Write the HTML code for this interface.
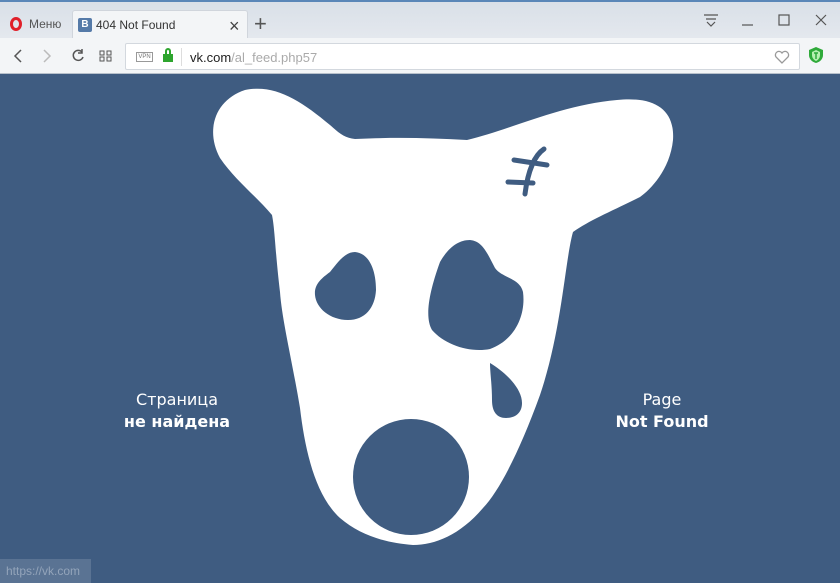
<!DOCTYPE html>
<html><head><meta charset="utf-8"><style>
*{margin:0;padding:0;box-sizing:border-box}
body{width:840px;height:583px;overflow:hidden;background:#3f5c81;font-family:"Liberation Sans",sans-serif;position:relative}
.tabbar{position:absolute;left:0;top:0;width:840px;height:38px;background:linear-gradient(#d9e0e8,#e4e8ee);border-top:2px solid #5a87b8}
.tab{position:absolute;left:72px;top:8px;width:176px;height:30px;background:#f3f5f7;border-radius:3px 3px 0 0;border:1px solid #d0d5dc;border-bottom:none}
.toolbar{position:absolute;left:0;top:38px;width:840px;height:36px;background:#f3f5f7;border-bottom:1px solid #b7c0cb}
.addr{position:absolute;left:125px;top:5px;width:675px;height:27px;background:#fff;border:1px solid #d3d8de;border-radius:2px}
.t{position:absolute;font-size:13px;color:#333}
.cap{position:absolute;color:#fff;font-family:"DejaVu Sans",sans-serif;text-align:center;font-size:16px;line-height:22px}
</style></head><body>
<div class="tabbar">
 <div style="position:absolute;left:10px;top:15px;width:12px;height:14px;border:3px solid #e0202a;border-radius:50%"></div>
 <div class="t" style="left:29px;top:15px;font-size:12px;color:#555">Меню</div>
 <div class="tab">
  <div style="position:absolute;left:5px;top:7px;width:14px;height:14px;background:#557aa8;border-radius:2px;color:#fff;font-size:10px;font-weight:bold;text-align:center;line-height:14px">B</div>
  <div class="t" style="left:23px;top:7px;font-size:12px">404 Not Found</div>
  <div class="t" style="left:156px;top:5px;font-size:18px;color:#444">×</div>
 </div>
 <div class="t" style="left:254px;top:9px;font-size:22px;color:#555;font-weight:300">+</div>
 <svg style="position:absolute;left:700px;top:10px" width="140" height="22" stroke="#555" fill="none" stroke-width="1.2">
  <path d="M4 3h14M6 7h10M7 10l4 4 4-4"/>
  <path d="M42 13h11"/>
  <rect x="79" y="3" width="10" height="10"/>
  <path d="M116 3l10 10M126 3l-10 10"/>
 </svg>
</div>
<div class="toolbar">
 <svg style="position:absolute;left:8px;top:9px" width="110" height="18" stroke="#555" fill="none" stroke-width="1.5">
  <path d="M13 3l-6 6 6 6"/>
  <path d="M36 3l6 6-6 6" stroke="#bbb"/>
  <path d="M74 5a5 5 0 1 0 1 5M74 2v4h-4"/>
  <rect x="92" y="4" width="4" height="4" stroke-width="1"/><rect x="99" y="4" width="4" height="4" stroke-width="1"/><rect x="92" y="10" width="4" height="4" stroke-width="1"/><rect x="99" y="10" width="4" height="4" stroke-width="1"/>
 </svg>
 <div class="addr">
  <div style="position:absolute;left:10px;top:8px;width:17px;height:10px;border:1px solid #999;font-size:6px;color:#777;text-align:center;line-height:8px">VPN</div>
  <div style="position:absolute;left:37px;top:10px;width:10px;height:8px;background:#2ea52e"></div>
  <div style="position:absolute;left:39px;top:4px;width:6px;height:8px;border:2px solid #2ea52e;border-bottom:none;border-radius:3px 3px 0 0"></div>
  <div style="position:absolute;left:55px;top:4px;width:1px;height:18px;background:#ddd"></div>
  <div class="t" style="left:64px;top:6px;color:#222">vk.com<span style="color:#aaa">/al_feed.php57</span></div>
  <svg style="position:absolute;left:648px;top:6px" width="16" height="14"><path d="M8 13L2 7a3.3 3.3 0 0 1 6-4 3.3 3.3 0 0 1 6 4z" fill="none" stroke="#999" stroke-width="1.3"/></svg>
 </div>
 <svg style="position:absolute;left:808px;top:8px" width="16" height="18"><path d="M8 1l7 3v5c0 4-3 7-7 8-4-1-7-4-7-8V4z" fill="#2faa3a"/><path d="M8 4l4 2v3c0 3-2 5-4 6-2-1-4-3-4-6V6z" fill="#b6f0b0"/><path d="M6 7h4M8 7v6" stroke="#2faa3a" stroke-width="1.5"/></svg>
</div>
<svg style="position:absolute;left:0;top:0" width="840" height="583">
 <path fill="#fff" d="M220 158C205 130 215 100 245 90C275 84 300 100 330 125C340 134 345 138 355 139C395 137 430 138 467 140C510 130 560 105 617 100C655 96 675 110 673 140C670 170 650 190 640 197C610 212 590 220 573 232C565 260 562 330 540 395C520 450 500 490 483 508C460 535 435 545 413 545C385 543 360 535 340 518C315 495 305 450 300 408C292 360 282 320 280 292C275 250 275 230 272 215C255 195 235 180 220 158Z"/>
 <g fill="#3f5c81">
  <path d="M330 272C338 262 345 252 355 252C368 253 376 268 376 290C375 308 365 320 348 320C330 320 316 308 315 295C314 284 322 278 330 272Z"/>
  <path d="M440 262C448 248 458 240 470 240C483 241 488 255 495 268C502 278 520 278 523 292C526 315 515 340 490 349C470 353 445 345 432 330C425 318 428 295 440 262Z"/>
  <path d="M490 363C505 372 522 388 522 403C522 414 514 418 506 418C497 418 492 412 492 400C492 385 490 372 490 363Z"/>
  <circle cx="411" cy="477" r="58"/>
 </g>
 <g stroke="#3f5c81" stroke-width="5" stroke-linecap="round" fill="none">
  <path d="M544 149C535 155 528 170 525 194"/>
  <path d="M514 160L547 165"/>
  <path d="M508 182L533 183"/>
 </g>
</svg>
<div class="cap" style="left:77px;top:389px;width:200px">Страница<br><b>не найдена</b></div>
<div class="cap" style="left:562px;top:389px;width:200px">Page<br><b>Not Found</b></div>
<div style="position:absolute;left:0;top:559px;width:91px;height:24px;background:#5a7393;color:#93a4ba;font-size:12px;padding:5px 0 0 6px">https://vk.com</div>
</body></html>
